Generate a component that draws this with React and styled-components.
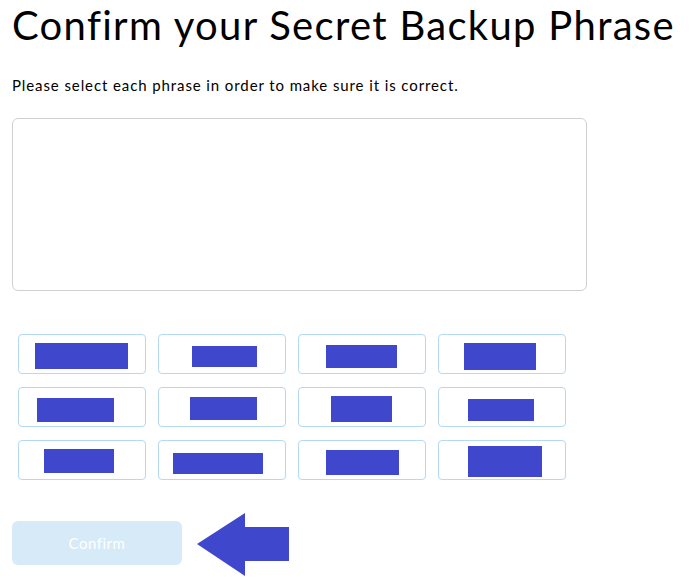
import React from "react"
import styled, { createGlobalStyle } from "styled-components"

const GlobalStyle = createGlobalStyle`
  body {
    margin: 0;
    background: #fff;
    font-family: Lato, "Open Sans", sans-serif;
    color: #000;
  }
`;

const Page = styled.div`
  padding: 0 12px;
  width: 694px;
  box-sizing: border-box;
`;

const Title = styled.h1`
  margin: 0;
  padding-top: 1px;
  font-size: 40px;
  font-weight: 400;
  line-height: 48px;
  letter-spacing: 1.3px;
  white-space: nowrap;
`;

const Subtitle = styled.p`
  margin: 26px 0 0 0;
  font-size: 15px;
  line-height: 20px;
  letter-spacing: 0.9px;
`;

const PhraseBox = styled.div`
  margin-top: 23px;
  width: 575px;
  height: 173px;
  box-sizing: border-box;
  border: 1px solid #d0d0d0;
  border-radius: 6px;
`;

const ChipGrid = styled.div`
  display: grid;
  grid-template-columns: repeat(4, 128px);
  column-gap: 12px;
  row-gap: 13px;
  margin: 43px 0 0 6px;
`;

const Chip = styled.div`
  position: relative;
  height: 40px;
  box-sizing: border-box;
  border: 1px solid #b3daf2;
  border-radius: 4px;
  background: #fff;
`;

// blue paint-over that hides each word
const Redact = styled.div`
  position: absolute;
  background: #3f48cc;
`;

const Footer = styled.div`
  display: flex;
  align-items: flex-start;
  gap: 15px;
  margin-top: 33px;
`;

const ConfirmButton = styled.button`
  margin-top: 8px;
  width: 170px;
  height: 44px;
  border: none;
  border-radius: 6px;
  background: #d7eaf8;
  color: #fff;
  font-family: Lato, "Open Sans", sans-serif;
  font-size: 15px;
  letter-spacing: 0.5px;
`;

// [left, top, width, height] of each paint-over, relative to chip
const redactions = [
  [16, 8, 93, 26], [33, 11, 65, 21], [27, 10, 71, 23], [25, 8, 72, 27],
  [18, 10, 77, 24], [31, 9, 67, 23], [32, 8, 61, 26], [29, 11, 66, 22],
  [25, 8, 70, 24], [14, 12, 90, 21], [27, 9, 73, 25], [29, 5, 74, 31],
];

const Arrow = () => (
  <svg width="92" height="63" viewBox="0 0 92 63">
    <polygon points="0,31 48,0 48,14 92,14 92,48 48,48 48,63" fill="#3f48cc" />
  </svg>
);

const App = () => {
  return (
    <>
      <GlobalStyle />
      <Page>
        <Title>Confirm your Secret Backup Phrase</Title>
        <Subtitle>Please select each phrase in order to make sure it is correct.</Subtitle>
        <PhraseBox />
        <ChipGrid>
          {redactions.map((r, i) => (
            <Chip key={i}>
              <Redact style={{ left: r[0], top: r[1], width: r[2], height: r[3] }} />
            </Chip>
          ))}
        </ChipGrid>
        <Footer>
          <ConfirmButton disabled>Confirm</ConfirmButton>
          <Arrow />
        </Footer>
      </Page>
    </>
  )
}

export default App;
